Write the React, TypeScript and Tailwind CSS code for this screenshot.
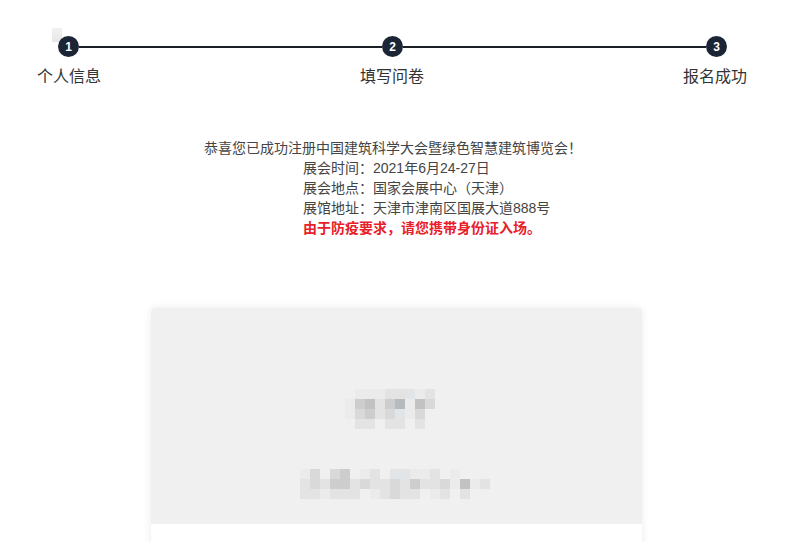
import React from 'react';

const steps = ['个人信息', '填写问卷', '报名成功'];

// mosaic palette, one class per shade
const shade: Record<string, string> = {
  '.': 'bg-transparent',
  a: 'bg-[#ebebeb]',
  b: 'bg-[#e3e3e3]',
  c: 'bg-[#d9d9d9]',
  d: 'bg-[#cdcdcd]',
  e: 'bg-[#c2c2c2]',
  f: 'bg-[#b6b9bd]',
  g: 'bg-[#e2e5e8]',
};

const mosaicTop = [
  '.aaabbgab.',
  'adebdfaec.',
  'acdbcgac..',
  '.bb.bb.b..',
];

const mosaicBottom = [
  'ac.cd.ab.ggaab.a....',
  'bcbddbcbbcbdbbcaeab.',
  'bbabbb.abcbb.ab.b...',
];

function Mosaic({ rows }: { rows: string[] }) {
  return (
    <div className="flex flex-col">
      {rows.map((row, i) => (
        <div key={i} className="flex">
          {row.split('').map((ch, j) => (
            <div key={j} className={`h-[10px] w-[10px] ${shade[ch]}`} />
          ))}
        </div>
      ))}
    </div>
  );
}

function Dot({ n }: { n: number }) {
  return (
    <div className="h-[21px] w-[21px] shrink-0 rounded-full bg-[#1b2536] flex items-center justify-center text-white text-[12px] font-bold leading-none">
      {n}
    </div>
  );
}

export default function App() {
  return (
    <div
      className="relative min-h-[542px] bg-white text-[#333] overflow-hidden"
      style={{ fontFamily: '"Liberation Sans", Arial, "Noto Sans CJK SC", sans-serif' }}
    >
      {/* faint artifact behind the first step */}
      <div className="absolute left-[52px] top-[28px] h-[14px] w-[10px] bg-gradient-to-b from-[#f2f2f2] to-[#e6e6e6]" />

      {/* Steps */}
      <div className="pt-[36px]">
        <div className="relative ml-[58px] w-[669px] flex items-center">
          <Dot n={1} />
          <div className="flex-1 h-[2px] bg-[#1c1f26]" />
          <Dot n={2} />
          <div className="flex-1 h-[2px] bg-[#1c1f26]" />
          <Dot n={3} />
        </div>
        <div className="ml-[37px] w-[710px] mt-[9px] flex justify-between">
          {steps.map((s) => (
            <div key={s} className="w-[64px] text-center text-[16px] leading-[22px] text-[#333]">
              {s}
            </div>
          ))}
        </div>
      </div>

      {/* Message */}
      <div className="mt-[50px] text-[14px] leading-[20px] text-[#444]">
        <div className="pr-[26px] text-center">恭喜您已成功注册中国建筑科学大会暨绿色智慧建筑博览会！</div>
        <div className="pl-[303px]">
          <div>展会时间：2021年6月24-27日</div>
          <div>展会地点：国家会展中心（天津）</div>
          <div>展馆地址：天津市津南区国展大道888号</div>
          <div className="font-bold text-[#e8202a]">由于防疫要求，请您携带身份证入场。</div>
        </div>
      </div>

      {/* Card */}
      <div className="mt-[70px] ml-[151px] w-[491px] rounded-[4px] overflow-hidden bg-white shadow-[0_0_8px_rgba(0,0,0,0.08)]">
        <div className="h-[216px] bg-[#f0f0f0] flex flex-col items-center">
          <div className="mt-[81px] ml-[-3px]">
            <Mosaic rows={mosaicTop} />
          </div>
          <div className="mt-[40px] ml-[7px]">
            <Mosaic rows={mosaicBottom} />
          </div>
        </div>
        <div className="h-[80px] bg-white" />
      </div>
    </div>
  );
}
